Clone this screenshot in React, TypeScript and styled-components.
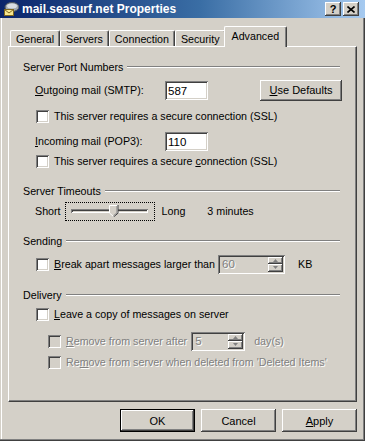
import React from 'react';
import styled, { createGlobalStyle, css } from 'styled-components';

const FS = '10.7px';

const GlobalStyle = createGlobalStyle`
  html, body { margin: 0; padding: 0; background: #d4d0c8; }
  body { font-family: "Liberation Sans", Arial, sans-serif; font-size: ${FS}; color: #000; }
  * { box-sizing: border-box; }
`;

const raised = css`
  box-shadow: inset -1px -1px #404040, inset 1px 1px #fff, inset -2px -2px #808080, inset 2px 2px #d4d0c8;
`;
const sunken = css`
  box-shadow: inset 1px 1px #808080, inset -1px -1px #fff, inset 2px 2px #404040, inset -2px -2px #d4d0c8;
`;

const Window = styled.div`
  width: 365px;
  height: 441px;
  background: #d4d0c8;
  display: flex;
  flex-direction: column;
  box-shadow: inset -1px -1px #404040, inset -2px -2px #808080, inset 1px 0 #d4d0c8, inset 2px 0 #fff;
`;

const TitleBar = styled.div`
  height: 18px;
  display: flex;
  align-items: center;
  padding: 0 6px 0 3px;
  background: linear-gradient(to right, #0a246a 0%, #3a6ea5 55%, #a6caf0 100%);
`;

const TitleText = styled.span`
  margin-left: 3px;
  color: #fff;
  font-weight: bold;
  font-size: 12px;
  white-space: nowrap;
`;

const TitleButtons = styled.div`
  margin-left: auto;
  display: flex;
  gap: 2px;
`;

const CaptionButton = styled.div`
  width: 16px;
  height: 14px;
  background: #d4d0c8;
  ${raised};
  display: flex;
  align-items: center;
  justify-content: center;
  font-weight: bold;
  font-size: 11px;
  line-height: 1;
  color: #000;
`;

const Body = styled.div`
  flex: 1;
  display: flex;
  flex-direction: column;
  padding: 8px 8px 0 8px;
`;

const TabStrip = styled.div`
  height: 20px;
  display: flex;
  align-items: flex-end;
  padding-left: 2px;
  position: relative;
  z-index: 1;
`;

const Tab = styled.div<{ $active?: boolean }>`
  height: ${(p) => (p.$active ? 21 : 16)}px;
  margin: ${(p) => (p.$active ? '0 -2px -1px -2px' : '0')};
  padding: ${(p) => (p.$active ? '3px 7px 0 7px' : '1px 5px 0 5px')};
  display: flex;
  align-items: ${(p) => (p.$active ? 'flex-start' : 'center')};
  background: #d4d0c8;
  border-top: 1px solid #fff;
  border-left: 1px solid #fff;
  border-right: 1px solid #404040;
  border-top-left-radius: 2px;
  border-top-right-radius: 2px;
  box-shadow: inset -1px 0 #808080;
  position: relative;
  z-index: ${(p) => (p.$active ? 2 : 1)};
  white-space: nowrap;
`;

const Panel = styled.div`
  height: 356px;
  border-top: 1px solid #fff;
  border-left: 1px solid #fff;
  border-right: 1px solid #404040;
  border-bottom: 1px solid #404040;
  box-shadow: inset -1px -1px #808080;
  padding: 13px 14px 0 14px;
  display: flex;
  flex-direction: column;
`;

const GroupHeader = styled.div<{ $mt?: number }>`
  height: 14px;
  margin-top: ${(p) => p.$mt ?? 0}px;
  display: flex;
  align-items: center;
  gap: 4px;
  white-space: nowrap;
`;

const HeaderLine = styled.div`
  flex: 1;
  height: 2px;
  margin-right: 2px;
  border-top: 1px solid #808080;
  border-bottom: 1px solid #fff;
`;

const Row = styled.div<{ $mt?: number; $h?: number; $indent?: number }>`
  height: ${(p) => p.$h ?? 14}px;
  margin-top: ${(p) => p.$mt ?? 0}px;
  padding-left: ${(p) => p.$indent ?? 13}px;
  display: flex;
  align-items: center;
  white-space: nowrap;
`;

const FieldLabel = styled.span`
  width: 130px;
`;

const TextInput = styled.div`
  width: 43px;
  height: 19px;
  background: #fff;
  ${sunken};
  padding: 1px 3px 0 3px;
  display: flex;
  align-items: center;
  font-size: 11.5px;
`;

const PushButton = styled.div<{ $w?: number; $h?: number; $default?: boolean }>`
  width: ${(p) => p.$w ?? 75}px;
  height: ${(p) => p.$h ?? 23}px;
  display: flex;
  align-items: center;
  justify-content: center;
  background: #d4d0c8;
  ${(p) =>
    p.$default
      ? css`
          border: 1px solid #000;
          box-shadow: inset -1px -1px #404040, inset 1px 1px #fff, inset -2px -2px #808080;
        `
      : raised};
  font-size: 11px;
`;

const RightButton = styled(PushButton)`
  margin-left: auto;
`;

const Check = styled.span<{ $disabled?: boolean }>`
  width: 13px;
  height: 13px;
  flex: none;
  background: ${(p) => (p.$disabled ? '#d4d0c8' : '#fff')};
  ${sunken};
  margin-right: 5px;
`;

const CheckText = styled.span<{ $disabled?: boolean }>`
  color: ${(p) => (p.$disabled ? '#808080' : '#000')};
  text-shadow: ${(p) => (p.$disabled ? '1px 1px #fff' : 'none')};
`;

const Text = styled.span<{ $ml?: number; $disabled?: boolean }>`
  margin-left: ${(p) => p.$ml ?? 0}px;
  color: ${(p) => (p.$disabled ? '#808080' : '#000')};
  text-shadow: ${(p) => (p.$disabled ? '1px 1px #fff' : 'none')};
`;

const SliderBox = styled.div`
  width: 90px;
  height: 19px;
  margin-left: 4px;
  border: 1px dotted #000;
  position: relative;
  display: flex;
  align-items: center;
  padding: 0 6px 0 5px;
`;

const Track = styled.div`
  flex: 1;
  height: 4px;
  ${sunken};
  background: #d4d0c8;
`;

const Thumb = styled.svg`
  position: absolute;
  left: 43px;
  top: 2px;
`;

const Spin = styled.div<{ $w: number; $ml: number }>`
  width: ${(p) => p.$w}px;
  height: 19px;
  background: #d4d0c8;
  ${sunken};
  padding: 2px;
  display: flex;
  margin-left: ${(p) => p.$ml}px;
`;

const SpinValue = styled.span`
  flex: 1;
  padding-left: 2px;
  font-size: 11.5px;
  line-height: 15px;
  color: #808080;
  text-shadow: 1px 1px #fff;
`;

const SpinButtons = styled.div`
  width: 15px;
  display: flex;
  flex-direction: column;
`;

const SpinButton = styled.div`
  flex: 1;
  ${raised};
  background: #d4d0c8;
  display: flex;
  align-items: center;
  justify-content: center;
`;

const Footer = styled.div`
  display: flex;
  justify-content: flex-end;
  gap: 6px;
  padding-top: 7px;
`;

const Arrow = ({ up }: { up?: boolean }) => (
  <svg width="5" height="3" viewBox="0 0 5 3">
    <path d={up ? 'M2.5 0 L5 3 L0 3 Z' : 'M0 0 L5 0 L2.5 3 Z'} fill="#808080" />
  </svg>
);

const SpinBox = ({ value, w, ml }: { value: string; w: number; ml: number }) => (
  <Spin $w={w} $ml={ml}>
    <SpinValue>{value}</SpinValue>
    <SpinButtons>
      <SpinButton>
        <Arrow up />
      </SpinButton>
      <SpinButton>
        <Arrow />
      </SpinButton>
    </SpinButtons>
  </Spin>
);

const MailIcon = () => (
  <svg width="16" height="16" viewBox="0 0 16 16">
    <ellipse cx="9" cy="6" rx="7" ry="4.5" fill="#a0a8b0" stroke="#505860" strokeWidth="1" />
    <ellipse cx="9" cy="5" rx="5" ry="2.5" fill="#d8dde2" />
    <rect x="1.5" y="8.5" width="9" height="6" fill="#f8e890" stroke="#806820" strokeWidth="1" />
    <path d="M1.5 8.5 L6 12 L10.5 8.5" fill="none" stroke="#806820" strokeWidth="1" />
  </svg>
);

export default function App() {
  return (
    <>
      <GlobalStyle />
      <Window>
        <TitleBar>
          <MailIcon />
          <TitleText>mail.seasurf.net Properties</TitleText>
          <TitleButtons>
            <CaptionButton>?</CaptionButton>
            <CaptionButton>
              <svg width="8" height="7" viewBox="0 0 8 7">
                <path d="M0.5 0.5 L7.5 6.5 M7.5 0.5 L0.5 6.5" stroke="#000" strokeWidth="1.6" />
              </svg>
            </CaptionButton>
          </TitleButtons>
        </TitleBar>
        <Body>
          <TabStrip>
            <Tab>General</Tab>
            <Tab>Servers</Tab>
            <Tab>Connection</Tab>
            <Tab>Security</Tab>
            <Tab $active>Advanced</Tab>
          </TabStrip>
          <Panel>
            <GroupHeader>
              Server Port Numbers
              <HeaderLine />
            </GroupHeader>
            <Row $mt={5} $h={22} $indent={12}>
              <FieldLabel>
                <Text>
                  <u>O</u>utgoing mail (SMTP):
                </Text>
              </FieldLabel>
              <TextInput>587</TextInput>
              <RightButton $w={82} $h={21}>
                <u>U</u>se Defaults
              </RightButton>
            </Row>
            <Row $mt={8}>
              <Check />
              <CheckText>This server requires a secure connection (SSL)</CheckText>
            </Row>
            <Row $mt={8} $h={20} $indent={12}>
              <FieldLabel>
                <Text>
                  <u>I</u>ncoming mail (POP3):
                </Text>
              </FieldLabel>
              <TextInput>110</TextInput>
            </Row>
            <Row $mt={3}>
              <Check />
              <CheckText>
                This server requires a secure <u>c</u>onnection (SSL)
              </CheckText>
            </Row>

            <GroupHeader $mt={16}>
              Server Timeouts
              <HeaderLine />
            </GroupHeader>
            <Row $mt={3} $h={20} $indent={12}>
              <Text>Short</Text>
              <SliderBox>
                <Track />
                <Thumb width="10" height="12" viewBox="0 0 10 12">
                  <path d="M0.5 0.5 H8.5 V8 L4.5 11.5 L0.5 8 Z" fill="#d4d0c8" stroke="#fff" strokeWidth="1" />
                  <path d="M9 0 V8.2 L4.5 12" fill="none" stroke="#404040" strokeWidth="1" />
                  <path d="M8 1 V7.8 L4.5 10.8" fill="none" stroke="#808080" strokeWidth="1" />
                </Thumb>
              </SliderBox>
              <Text $ml={7}>Long</Text>
              <Text $ml={22}>3 minutes</Text>
            </Row>

            <GroupHeader $mt={13}>
              Sending
              <HeaderLine />
            </GroupHeader>
            <Row $mt={7} $h={18}>
              <Check />
              <CheckText>
                <u>B</u>reak apart messages larger than
              </CheckText>
              <SpinBox value="60" w={67} ml={3} />
              <Text $ml={13}>KB</Text>
            </Row>

            <GroupHeader $mt={15}>
              Delivery
              <HeaderLine />
            </GroupHeader>
            <Row $mt={5}>
              <Check />
              <CheckText>
                <u>L</u>eave a copy of messages on server
              </CheckText>
            </Row>
            <Row $mt={10} $h={20} $indent={25}>
              <Check $disabled />
              <CheckText $disabled>
                <u>R</u>emove from server after
              </CheckText>
              <SpinBox value="5" w={54} ml={4} />
              <Text $ml={9} $disabled>
                day(s)
              </Text>
            </Row>
            <Row $mt={4} $indent={25}>
              <Check $disabled />
              <CheckText $disabled>
                Re<u>m</u>ove from server when deleted from 'Deleted Items'
              </CheckText>
            </Row>
          </Panel>
          <Footer>
            <PushButton $default>OK</PushButton>
            <PushButton>Cancel</PushButton>
            <PushButton>
              <u>A</u>pply
            </PushButton>
          </Footer>
        </Body>
      </Window>
    </>
  );
}
